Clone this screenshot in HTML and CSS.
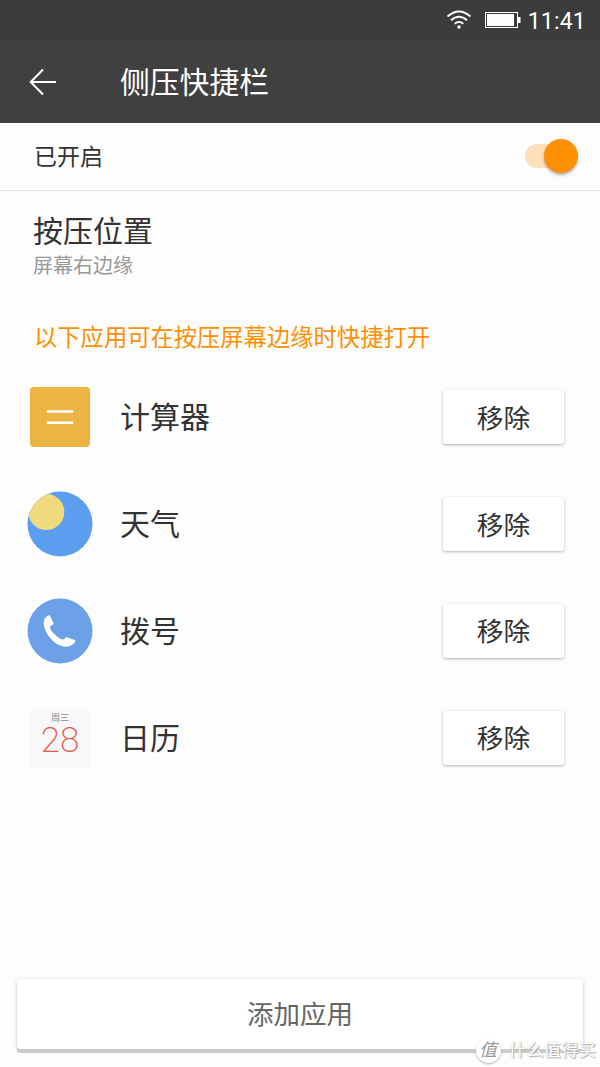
FILE: index.html
```html
<!DOCTYPE html>
<html lang="zh-CN">
  <head>
    <meta charset="UTF-8" />
    <meta name="viewport" content="width=device-width, initial-scale=1.0" />
    <title>侧压快捷栏</title>
    <link rel="stylesheet" href="styles.css">
  </head>
  <body>
    <div class="status-bar">
      <svg class="wifi" width="26" height="20" viewBox="0 0 26 20">
        <path d="M1.500 6.500Q13 -3.500 24.500 6.500M5 10.200Q13 3.200 21 10.200M8.700 13.700Q13 10 17.300 13.700" />
        <circle cx="13" cy="17" r="1.700" />
      </svg>
      <svg class="battery" width="36" height="16" viewBox="0 0 36 16">
        <rect class="battery-case" x="0.500" y="0.500" width="32" height="15" />
        <rect x="2" y="2" width="27" height="12" />
        <rect x="33" y="5" width="2.500" height="6" />
      </svg>
      <span class="time">11:41</span>
    </div>

    <header class="header">
      <svg class="back" width="28" height="28" viewBox="0 0 28 28">
        <path d="M14 1.500L1.700 14L14 26.500M1.700 14H27" />
      </svg>
      <h1>侧压快捷栏</h1>
    </header>

    <main>
      <div class="switch-row">
        <span class="switch-label">已开启</span>
        <div class="switch"><div class="knob"></div></div>
      </div>

      <section class="position">
        <h2>按压位置</h2>
        <p>屏幕右边缘</p>
      </section>

      <p class="hint">以下应用可在按压屏幕边缘时快捷打开</p>

      <ul class="app-list">
        <li>
          <svg class="app-icon" width="66" height="66" viewBox="0 0 66 66">
            <rect x="3" y="3" width="60" height="60" rx="4" fill="#ebb443" />
            <path d="M20.800 27.500H45.200M20.800 38.700H45.200" stroke="#fff" stroke-width="2.600" stroke-linecap="round" />
          </svg>
          <span class="app-name">计算器</span>
          <button>移除</button>
        </li>
        <li>
          <svg class="app-icon" width="66" height="66" viewBox="0 0 66 66">
            <clipPath id="sky"><circle cx="33" cy="33" r="32.500" /></clipPath>
            <circle cx="33" cy="33" r="32.500" fill="#5c9ff0" />
            <circle cx="19.300" cy="21" r="18" fill="#f0da7d" clip-path="url(#sky)" />
          </svg>
          <span class="app-name">天气</span>
          <button>移除</button>
        </li>
        <li>
          <svg class="app-icon" width="66" height="66" viewBox="0 0 66 66">
            <circle cx="33" cy="33" r="32.500" fill="#6ca1e7" />
            <path d="M21.800 17.300C22.700 16.900 23 17.500 23.500 18.800L26.700 25.500C27 26.500 23.200 27.400 23 29.300C22.800 32.500 31.500 41 35.500 41.500C37.500 41.800 38 38.700 40 39.200L47.800 42C49.300 42.700 48 44.200 46.500 45.800C42 50.200 35 49.300 29 45.300C22.500 40.800 16.700 32 16.700 25C16.700 21 18.600 18.900 21.800 17.300Z" fill="#fff" />
          </svg>
          <span class="app-name">拨号</span>
          <button>移除</button>
        </li>
        <li>
          <div class="app-icon calendar">
            <span class="weekday">周三</span>
            <span class="day">28</span>
          </div>
          <span class="app-name">日历</span>
          <button>移除</button>
        </li>
      </ul>
    </main>

    <button class="add-button">添加应用</button>

    <div class="watermark">
      <span class="watermark-logo">值</span>
      <span>什么值得买</span>
    </div>
  </body>
</html>
```
FILE: styles.css
```css
* {
  margin: 0;
  padding: 0;
  box-sizing: border-box;
}

body {
  position: relative;
  display: flex;
  flex-direction: column;
  height: 1067px;
  overflow: hidden;
  background: #fdfdfd;
  color: #333;
  font-family: Roboto, "Noto Sans CJK SC", sans-serif;
}

h1,
h2 {
  font-weight: 400;
}

.status-bar {
  display: flex;
  align-items: center;
  justify-content: flex-end;
  height: 40px;
  padding-right: 14px;
  background: #3c3c3c;
  color: #fff;
  fill: #fff;
}

.wifi {
  margin-right: 13px;
}

.wifi path {
  fill: none;
  stroke: #fff;
  stroke-width: 1.8;
}

.battery {
  margin-right: 7px;
}

.battery-case {
  fill: none;
  stroke: #fff;
}

.time {
  font-size: 23px;
  letter-spacing: 0.2px;
  line-height: 36px;
  padding-top: 3px;
}

.header {
  display: flex;
  align-items: center;
  height: 83px;
  padding-left: 29px;
  background: #404040;
  color: #fff;
}

.back {
  margin-right: 63px;
  fill: none;
  stroke: #fff;
  stroke-width: 2;
}

.header h1 {
  padding-top: 2px;
  font-size: 29.8px;
  line-height: 40px;
}

main {
  flex-grow: 1;
}

.switch-row {
  display: flex;
  align-items: center;
  justify-content: space-between;
  height: 68px;
  padding: 0 22px 1px 34px;
  border-bottom: 1px solid #e2e2e2;
  font-size: 23px;
}

.switch-label {
  padding-bottom: 2px;
}

.switch {
  display: flex;
  align-items: center;
  justify-content: flex-end;
  width: 53px;
  height: 24px;
  border-radius: 12px;
  background: #fedfba;
}

.knob {
  width: 34px;
  height: 34px;
  border-radius: 50%;
  background: #fd9003;
  box-shadow: 0 2px 3px rgba(0, 0, 0, 0.3);
}

.position {
  padding: 21px 33px 0;
}

.position h2 {
  font-size: 30px;
  line-height: 40px;
}

.position p {
  color: #999;
  font-size: 20px;
  line-height: 28px;
}

.hint {
  margin-top: 43px;
  padding-left: 34px;
  color: #fd9003;
  font-size: 23.3px;
  line-height: 30px;
}

.app-list {
  margin-top: 11px;
  list-style: none;
}

.app-list li {
  display: flex;
  align-items: center;
  height: 106.8px;
  padding: 0 36px 0 27px;
}

.app-icon {
  flex: none;
}

.app-name {
  flex-grow: 1;
  margin-left: 27px;
  padding-top: 2px;
  font-size: 30px;
  line-height: 40px;
}

.calendar {
  display: flex;
  flex-direction: column;
  align-items: center;
  width: 60px;
  height: 60px;
  margin: 0 3px;
  padding-top: 4px;
  border-radius: 4px;
  background: #f8f8f8;
}

.weekday {
  color: #888;
  font-size: 9px;
  line-height: 12px;
}

.day {
  color: #e8554d;
  font-size: 35px;
  font-weight: 200;
  line-height: 34px;
}

button {
  border: none;
  border-radius: 3px;
  background: #fff;
  color: #333;
  font-family: inherit;
}

.app-list button {
  width: 121px;
  height: 54px;
  padding-bottom: 2px;
  box-shadow: 0 1px 3px rgba(0, 0, 0, 0.3);
  font-size: 26.7px;
}

.add-button {
  flex: none;
  height: 70px;
  margin: 0 17px 18px 17px;
  padding-bottom: 3px;
  box-shadow: 0 4px 1px #cbcbcb, 0 1px 4px rgba(0, 0, 0, 0.2);
  color: #666;
  font-size: 26.5px;
}

/* sits over the bottom edge of the add button */
.watermark {
  position: absolute;
  right: 4px;
  bottom: 4px;
  display: flex;
  align-items: center;
  gap: 8px;
  color: #fff;
  font-size: 17.5px;
  line-height: 26px;
  text-shadow: 1px 1px 1px #aaa, 0 0 1px #bbb;
}

.watermark-logo {
  width: 25px;
  height: 25px;
  border-radius: 50%;
  background: #fff;
  box-shadow: 0 1px 2px rgba(0, 0, 0, 0.3);
  color: #999;
  font-style: italic;
  line-height: 24px;
  text-align: center;
  text-shadow: none;
}
```
